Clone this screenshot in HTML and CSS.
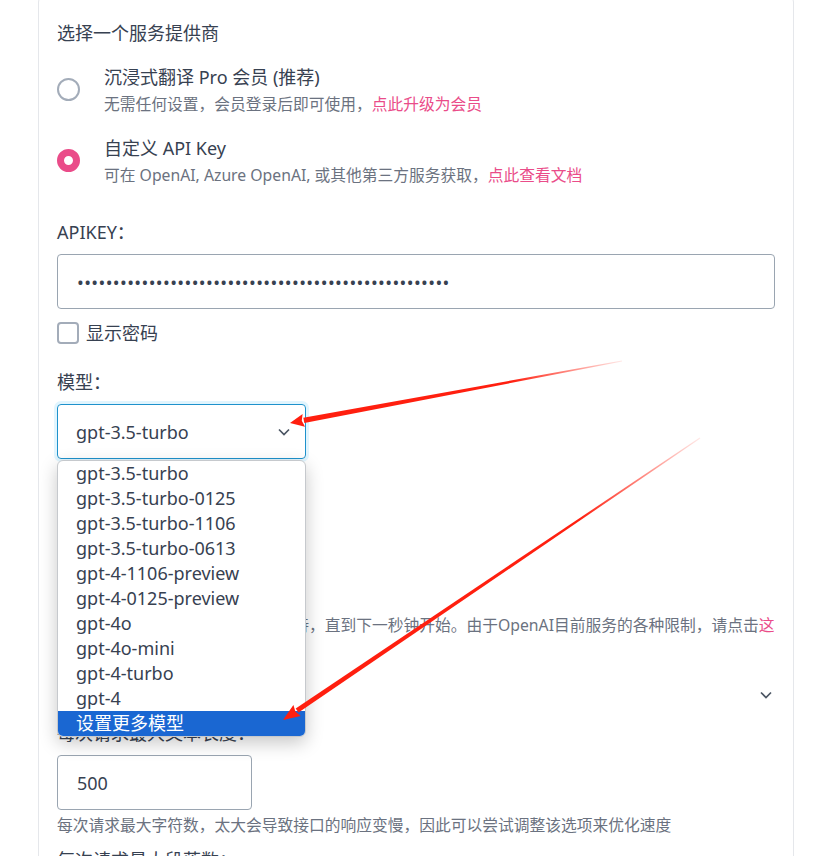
FILE: index.html
```html
<!DOCTYPE html>
<html lang="zh-CN">
<head>
    <meta charset="UTF-8">
    <meta name="viewport" content="width=device-width, initial-scale=1.0">
    <title>翻译服务设置</title>
    <link rel="stylesheet" href="styles.css">
</head>
<body>
    <div class="card">
        <!-- 服务提供商 -->
        <h3 class="section-title">选择一个服务提供商</h3>
        <label class="provider">
            <input type="radio" name="provider" class="radio">
            <span class="provider-text">
                <span class="provider-name">沉浸式翻译 Pro 会员 (推荐)</span>
                <span class="provider-desc">无需任何设置，会员登录后即可使用，<a href="#">点此升级为会员</a></span>
            </span>
        </label>
        <label class="provider">
            <input type="radio" name="provider" class="radio" checked>
            <span class="provider-text">
                <span class="provider-name">自定义 API Key</span>
                <span class="provider-desc">可在 OpenAI, Azure OpenAI, 或其他第三方服务获取，<a href="#">点此查看文档</a></span>
            </span>
        </label>

        <!-- APIKEY -->
        <label class="field-label label-key" for="apiKey">APIKEY：</label>
        <input class="text-input" type="password" id="apiKey" value="sk-0000000000000000000000000000000000000000000000000">
        <label class="check-row">
            <input type="checkbox" class="checkbox">
            <span>显示密码</span>
        </label>

        <!-- 模型 -->
        <label class="field-label label-model">模型：</label>
        <div class="select">
            <div class="select-box">
                <span>gpt-3.5-turbo</span>
                <svg class="chevron" width="12" height="8" viewBox="0 0 12 8"><polyline points="1,1.5 6,6.5 11,1.5" fill="none" stroke="#4b5563" stroke-width="1.7"/></svg>
            </div>
            <ul class="options">
                <li>gpt-3.5-turbo</li>
                <li>gpt-3.5-turbo-0125</li>
                <li>gpt-3.5-turbo-1106</li>
                <li>gpt-3.5-turbo-0613</li>
                <li>gpt-4-1106-preview</li>
                <li>gpt-4-0125-preview</li>
                <li>gpt-4o</li>
                <li>gpt-4o-mini</li>
                <li>gpt-4-turbo</li>
                <li>gpt-4</li>
                <li class="active">设置更多模型</li>
            </ul>
        </div>

        <!-- 每秒最大请求数 -->
        <label class="field-label label-rate">每秒最大请求数：</label>
        <input class="text-input small-input" type="text" value="10">
        <p class="help">超过该数量的请求都将进入排队等待，直到下一秒钟开始。由于OpenAI目前服务的各种限制，请点击<a href="#">这里</a>查看最新建议的数值</p>

        <div class="more-row">
            <span>更多设置</span>
            <svg class="chevron" width="12" height="8" viewBox="0 0 12 8"><polyline points="1,1.5 6,6.5 11,1.5" fill="none" stroke="#4b5563" stroke-width="1.7"/></svg>
        </div>

        <!-- 文本长度 -->
        <label class="field-label label-length">每次请求最大文本长度：</label>
        <input class="text-input small-input" type="text" value="500">
        <p class="help">每次请求最大字符数，太大会导致接口的响应变慢，因此可以尝试调整该选项来优化速度</p>

        <label class="field-label label-para">每次请求最大段落数：</label>
        <input class="text-input small-input" type="text" value="8">
    </div>

    <!-- 标注箭头 -->
    <svg class="arrows" width="839" height="856" viewBox="0 0 839 856">
        <defs>
            <linearGradient id="fade1" gradientUnits="userSpaceOnUse" x1="622" y1="361" x2="304" y2="420">
                <stop offset="0" stop-color="#ff1f0f" stop-opacity="0.1"/>
                <stop offset="0.35" stop-color="#ff1f0f" stop-opacity="1"/>
            </linearGradient>
            <linearGradient id="fade2" gradientUnits="userSpaceOnUse" x1="700" y1="438" x2="297" y2="710">
                <stop offset="0" stop-color="#ff1f0f" stop-opacity="0.1"/>
                <stop offset="0.3" stop-color="#ff1f0f" stop-opacity="1"/>
            </linearGradient>
        </defs>
        <polygon points="621.9,360.5 622.1,361.5 304.3,423 303.3,417.8" fill="url(#fade1)"/>
        <polygon points="290,423 302.6,414 301.8,420.8 305,426.8" fill="#ff1f0f"/>
        <polygon points="699.7,437.6 700.3,438.4 298.5,712.6 295.7,708.4" fill="url(#fade2)"/>
        <polygon points="283,720 293.4,705.1 295.4,711.6 300.7,715.9" fill="#ff1f0f"/>
    </svg>
</body>
</html>
```

FILE: styles.css
```css
body {
    margin: 0;
    position: relative;
    height: 856px;
    overflow: hidden;
    font-family: "Noto Sans", "Noto Sans CJK SC", sans-serif;
    color: #374151;
    background-color: #fff;
}

a {
    color: #ea4c89;
    text-decoration: none;
}

/* 卡片 */
.card {
    box-sizing: border-box;
    width: 756px;
    margin: -6px 0 0 38px;
    padding: 25px 18px 40px;
    border: 1px solid #e5e7eb;
    border-radius: 8px;
}

.section-title {
    margin: 0 0 18px;
    font-size: 18px;
    font-weight: normal;
    line-height: 26px;
}

/* 服务提供商单选 */
.provider {
    display: flex;
    align-items: center;
    gap: 24px;
    margin-bottom: 20px;
}

.radio {
    appearance: none;
    box-sizing: border-box;
    flex: none;
    width: 23px;
    height: 23px;
    margin: 0;
    border: 2px solid #a3acb9;
    border-radius: 50%;
    background-color: #fff;
}

.radio:checked {
    border: 7.5px solid #ea4c89;
}

.provider-text {
    display: flex;
    flex-direction: column;
}

.provider-name {
    font-size: 18px;
    line-height: 26px;
    margin-bottom: 4px;
}

.provider-desc {
    font-size: 15.75px;
    line-height: 21px;
    color: #6b7280;
}

/* 表单字段 */
.field-label {
    display: block;
    font-size: 18px;
    line-height: 26px;
    margin-bottom: 9px;
    white-space: nowrap;
}

.label-key {
    margin-top: 33px;
}

.label-model {
    margin-top: 23px;
}

.label-rate {
    margin-top: 61px;
}

.label-length {
    margin-top: 5px;
}

.label-para {
    margin-top: 11px;
}

.text-input {
    display: block;
    box-sizing: border-box;
    width: 100%;
    height: 55px;
    padding: 0 19px;
    border: 1px solid #9aa5b1;
    border-radius: 4px;
    font-family: inherit;
    font-size: 18px;
    color: #374151;
    background-color: #fff;
    outline: none;
}

.text-input[type="password"] {
    letter-spacing: 0.4px;
}

.small-input {
    width: 195px;
}

.check-row {
    display: flex;
    align-items: center;
    gap: 7px;
    margin-top: 11px;
    font-size: 18px;
    line-height: 26px;
}

.checkbox {
    appearance: none;
    box-sizing: border-box;
    width: 22px;
    height: 22px;
    margin: 0;
    border: 2px solid #a3acb9;
    border-radius: 4px;
}

/* 下拉选择 */
.select {
    position: relative;
    width: 249px;
}

.select-box {
    box-sizing: border-box;
    display: flex;
    align-items: center;
    justify-content: space-between;
    height: 55px;
    padding: 0 15px 0 18px;
    border: 1px solid #1e92cc;
    border-radius: 4px;
    box-shadow: 0 0 0 3px rgba(56, 189, 248, 0.15);
    font-size: 18px;
}

.options {
    position: absolute;
    top: 56px;
    left: 0;
    z-index: 2;
    box-sizing: border-box;
    width: 249px;
    margin: 0;
    padding: 0;
    list-style: none;
    background-color: #fff;
    border: 1px solid #c6c9cd;
    border-radius: 6px;
    box-shadow: 0 6px 18px rgba(0, 0, 0, 0.22);
    overflow: hidden;
}

.options li {
    height: 25px;
    padding-left: 18px;
    font-size: 18px;
    line-height: 25px;
    color: #374151;
}

.options li.active {
    background-color: #1a67d2;
    color: #fff;
}

.help {
    margin: 4px 0 0;
    font-size: 15.75px;
    line-height: 22px;
    color: #6b7280;
}

.more-row {
    display: flex;
    align-items: center;
    justify-content: space-between;
    height: 40px;
    margin-top: 17px;
    padding-right: 3px;
    font-size: 18px;
}

/* 箭头标注 */
.arrows {
    position: absolute;
    top: 0;
    left: 0;
    z-index: 5;
    pointer-events: none;
}
```
